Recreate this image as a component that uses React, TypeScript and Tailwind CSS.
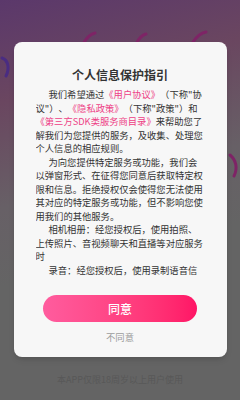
import React from "react";

const font = { fontFamily: '"Noto Sans CJK SC", "Noto Sans", sans-serif' };

function Link({ children }: { children: React.ReactNode }) {
    return <span className="text-[#ee3f86]">{children}</span>;
}

export default function App() {
    return (
        <div
            className="relative w-[240px] h-[400px] overflow-hidden bg-[linear-gradient(165deg,#5b386b_0%,#6a4660_22%,#676066_45%,#646464_62%)]"
            style={font}
        >
            {/* faint decoration of the page behind the overlay */}
            <svg className="absolute left-0 top-0" width="240" height="200" viewBox="0 0 240 200" fill="none">
                <path d="M82 46 C86 38, 90 34, 95 33" stroke="#7e2466" strokeWidth="3" strokeLinecap="round" />
                <path d="M136 44 C139 38, 142 35, 146 34" stroke="#7e2466" strokeWidth="3" strokeLinecap="round" />
                <path d="M193 42 C197 36, 201 33, 206 32" stroke="#7e2466" strokeWidth="3" strokeLinecap="round" />
                <path d="M2 58 C8 60, 10 68, 6 76" stroke="#4a2c82" strokeWidth="3" strokeLinecap="round" />
                <path d="M230 155 C236 160, 238 168, 234 176" stroke="#7e2466" strokeWidth="3" strokeLinecap="round" />
            </svg>

            <div className="relative flex flex-col items-center pt-[42px]">
                <div className="w-[213px] h-[315px] bg-[#f7f7f7] rounded-[8px] shadow-md flex flex-col">
                    <h1 className="pt-[25px] text-center text-[12px] leading-[16px] font-bold text-[#333]">
                        个人信息保护指引
                    </h1>

                    <div className="mt-[5px] ml-[22px] w-[168px] h-[189px] shrink-0 overflow-hidden text-[9.3px] leading-[13.5px] text-[#333] [text-spacing-trim:space-all] break-all">
                        <p className="indent-[13px]">
                            我们希望通过<Link>《用户协议》</Link>（下称"协议"）、<Link>《隐私政策》</Link>（下称"政策"）和<Link>《第三方SDK类服务商目录》</Link>来帮助您了解我们为您提供的服务，及收集、处理您个人信息的相应规则。
                        </p>
                        <p className="indent-[13px]">
                            为向您提供特定服务或功能，我们会以弹窗形式、在征得您同意后获取特定权限和信息。拒绝授权仅会使得您无法使用其对应的特定服务或功能，但不影响您使用我们的其他服务。
                        </p>
                        <p className="indent-[13px]">
                            相机相册：经您授权后，使用拍照、上传照片、音视频聊天和直播等对应服务时
                        </p>
                        <p className="indent-[13px]">
                            录音：经您授权后，使用录制语音信息进行聊天、发布动态等对应服务时
                        </p>
                    </div>

                    <button className="mt-[18px] mx-auto w-[154px] h-[27px] rounded-full bg-gradient-to-r from-[#ff5c9e] to-[#ff1466] text-white text-[12px] font-medium">
                        同意
                    </button>
                    <div className="mt-[9px] text-center text-[9.3px] leading-[12px] text-[#9c9c9c]">
                        不同意
                    </div>
                </div>

                <div className="mt-[17px] text-center text-[9px] leading-[12px] text-[#585858]">
                    本APP仅限18周岁以上用户使用
                </div>
            </div>
        </div>
    );
}
